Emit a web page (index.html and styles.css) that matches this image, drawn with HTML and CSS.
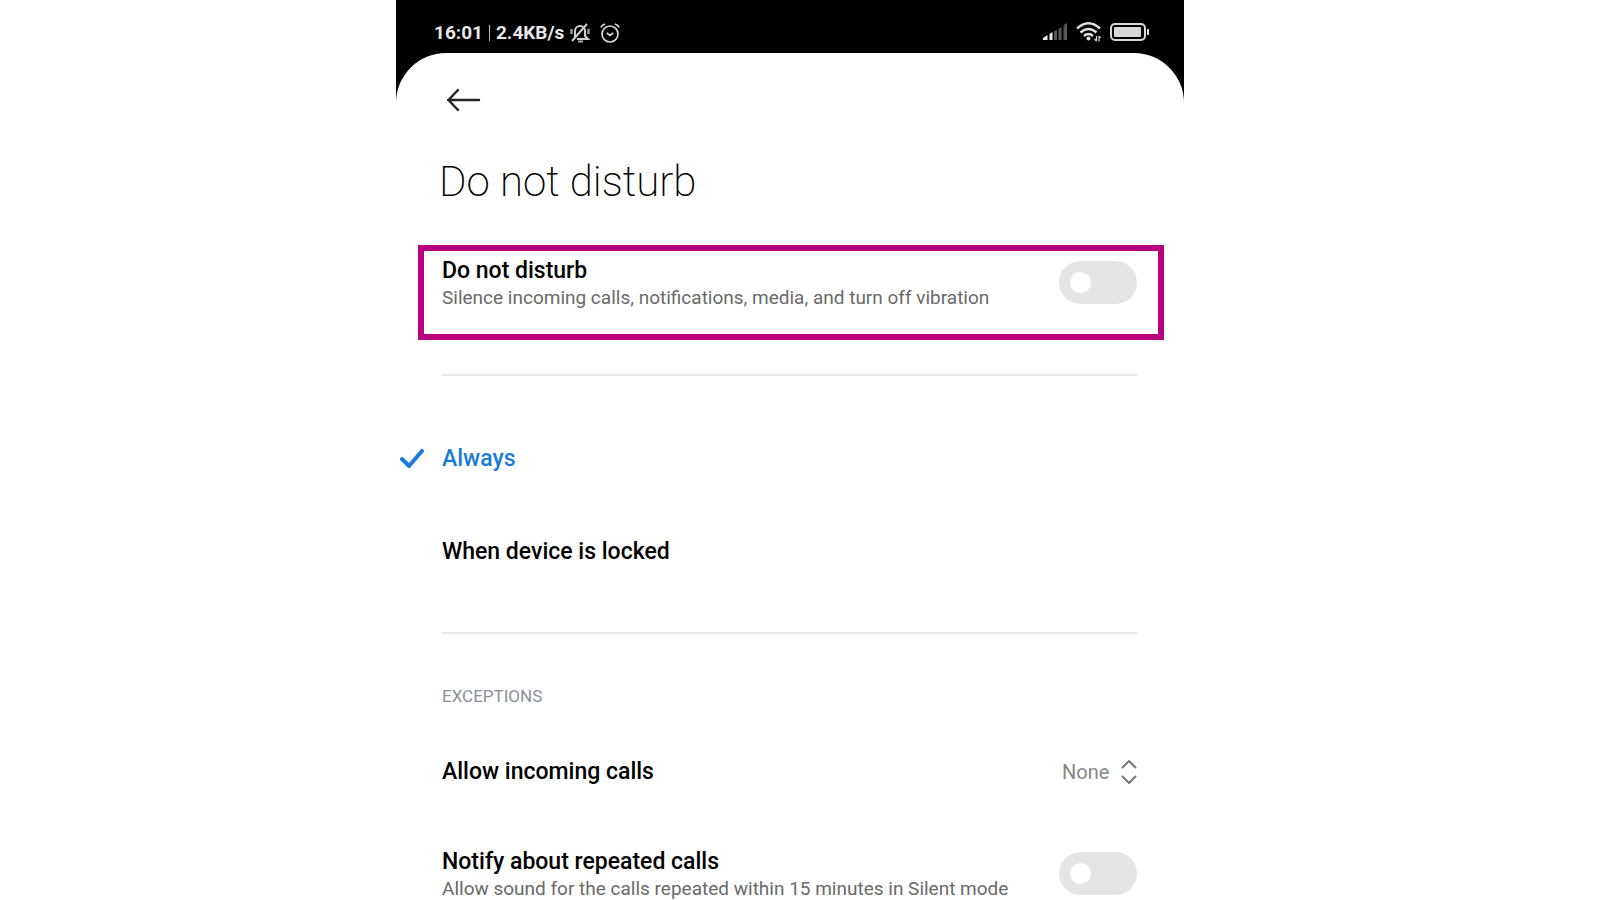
FILE: index.html
```html
<!DOCTYPE html>
<html lang="en">
<head>
    <meta charset="UTF-8">
    <meta name="viewport" content="width=device-width, initial-scale=1.0">
    <title>Do not disturb</title>
    <link rel="stylesheet" href="styles.css">
</head>
<body>

<div class="phone">
    <div class="status-bar">
        <div class="status-left">
            <span>16:01</span>
            <span class="separator"></span>
            <span>2.4KB/s</span>
            <svg class="icon-bell" width="20" height="20" viewBox="0 0 20 20" fill="none" stroke="#d0d0d0" stroke-width="2">
                <path d="M5 14V8a5 5 0 0 1 10 0v5l3 3H7"/>
                <path d="M8 18.500h5" stroke="#aaa"/>
                <path d="M1.500 6v5M18.500 6v5" stroke="#999" stroke-width="2.500"/>
                <path d="M2 18L17 1"/>
            </svg>
            <svg class="icon-alarm" width="20" height="20" viewBox="0 0 20 20" fill="none" stroke="#d8d8d8" stroke-width="1.700">
                <circle cx="10" cy="11" r="8"/>
                <path d="M6.800 10l3.200 2.500 3.200-2.500M.8 4.500Q2 2 5 1M19.200 4.500Q18 2 15 1"/>
            </svg>
        </div>
        <div class="status-right">
            <svg width="24" height="18" viewBox="0 0 24 18">
                <path fill="#e8e8e8" d="M0 17v-2l4.500-3v5zM6.500 17v-6l3-2v8z"/>
                <path fill="#555" d="M11 17V8l3-1v10zM15.500 17V6l3-2v13zM20.500 17V2L24 0v17z"/>
            </svg>
            <svg width="25" height="20" viewBox="0 0 25 20" fill="none" stroke="#e0e0e0" stroke-width="2.400">
                <path d="M1 6.500Q12.500-4 24 6.500M4.500 10.500q8-7 16 0M8 14q4.500-4 9 0"/>
                <circle cx="12.500" cy="16.500" r="2" fill="#e0e0e0" stroke="none"/>
                <path stroke-width="1.200" d="M20.500 14v5M18.500 17l2 2M23 19.500V14M23 14l1.500 2"/>
            </svg>
            <svg width="39" height="18" viewBox="0 0 39 18">
                <rect x="1" y="1" width="34" height="16" rx="4" fill="none" stroke="#d8d8d8" stroke-width="2"/>
                <rect x="4" y="4" width="27" height="10" rx="1" fill="#d8d8d8"/>
                <rect x="37" y="6" width="2" height="6" fill="#d8d8d8"/>
            </svg>
        </div>
    </div>

    <main class="sheet">
        <button type="button" class="back" aria-label="Back">
            <svg width="34" height="24" viewBox="0 0 34 24" fill="none" stroke="#222" stroke-width="2.400" stroke-linecap="round" stroke-linejoin="round">
                <path d="M32 12H1M11 2L1.500 12l9.500 10"/>
            </svg>
        </button>
        <h1>Do not disturb</h1>

        <div class="row highlight">
            <label class="row-text" for="dnd">
                <span class="row-title">Do not disturb</span>
                <span class="row-desc">Silence incoming calls, notifications, media, and turn off vibration</span>
            </label>
            <input type="checkbox" class="switch" id="dnd">
        </div>

        <hr>

        <div class="options">
            <label class="option">
                <input type="radio" name="mode" checked>
                <svg class="tick" width="24" height="20" viewBox="0 0 24 20" fill="none" stroke="#1a7be0" stroke-width="4" stroke-linecap="round" stroke-linejoin="round">
                    <path d="M2 10l7 7L22 2"/>
                </svg>
                <span>Always</span>
            </label>
            <label class="option">
                <input type="radio" name="mode">
                <span>When device is locked</span>
            </label>
        </div>

        <hr>

        <h2>EXCEPTIONS</h2>

        <div class="row calls">
            <label class="row-title" for="calls">Allow incoming calls</label>
            <div class="picker">
                <select id="calls">
                    <option>None</option>
                </select>
                <svg width="16" height="26" viewBox="0 0 16 26" fill="none" stroke="#777" stroke-width="2" stroke-linecap="round" stroke-linejoin="round">
                    <path d="M1.500 8.500L8 2l6.500 6.500M1.500 17.500L8 24l6.500-6.500"/>
                </svg>
            </div>
        </div>

        <div class="row">
            <label class="row-text" for="repeated">
                <span class="row-title">Notify about repeated calls</span>
                <span class="row-desc">Allow sound for the calls repeated within 15 minutes in Silent mode</span>
            </label>
            <input type="checkbox" class="switch" id="repeated">
        </div>
    </main>
</div>

</body>
</html>
```
FILE: styles.css
```css
* {
    box-sizing: border-box;
}
body {
    font-family: Roboto, sans-serif;
    background: #fff;
    color: #000;
    margin: 0;
    padding-right: 20px;
}
.phone {
    display: flex;
    flex-direction: column;
    max-width: 788px;
    height: 100vh;
    margin: 0 auto;
    background: #000;
    overflow: hidden;
}
.status-bar {
    display: flex;
    justify-content: space-between;
    align-items: flex-start;
    flex-shrink: 0;
    padding: 20px 35px 8px 38px;
    color: #e8e8e8;
    font-size: 19px;
    font-weight: 700;
    line-height: 25px;
}
.status-left,
.status-right {
    display: flex;
    align-items: center;
}
.status-right {
    gap: 9px;
    height: 24px;
}
.separator {
    width: 1px;
    height: 16px;
    margin: 0 6px;
    background: #bbb;
}
.icon-bell {
    margin-left: 6px;
}
.icon-alarm {
    margin-left: 10px;
}
.sheet {
    flex: 1;
    min-height: 0;
    padding: 31px 47px 0 46px;
    background: #fff;
    border-radius: 50px 50px 0 0;
    overflow-y: auto;
    scrollbar-width: none;
}
.back {
    display: flex;
    align-items: center;
    height: 32px;
    margin: 0;
    padding: 0 5px;
    border: none;
    background: none;
    cursor: pointer;
}
h1 {
    margin: 41px 0 38px -3px;
    font-size: 42px;
    font-weight: 200;
    line-height: 50px;
}
.row {
    display: flex;
    justify-content: space-between;
    align-items: flex-start;
}
.highlight {
    margin: 0 -27px 0 -24px;
    padding: 5px 21px 23px 18px;
    border: 6px solid #b9007f;
}
.row-text {
    display: flex;
    flex-direction: column;
    padding-top: 1px;
}
.row-title {
    font-size: 23px;
    font-weight: 500;
    line-height: 28px;
}
.row-desc {
    color: #6a6a6a;
    font-size: 19px;
    font-weight: 400;
    line-height: 26px;
}
.switch {
    appearance: none;
    flex-shrink: 0;
    width: 78px;
    height: 43px;
    margin: 5px 0 0;
    padding: 11px;
    border-radius: 22px;
    background: #e5e5e5;
    cursor: pointer;
}
.switch::before {
    content: "";
    display: block;
    width: 21px;
    height: 21px;
    border-radius: 50%;
    background: #fff;
}
.switch:checked {
    background: #1a7be0;
}
.switch:checked::before {
    margin-left: auto;
}
hr {
    height: 2px;
    margin: 34px 0 36px;
    border: none;
    background: #e8e8e8;
}
.option {
    display: flex;
    align-items: center;
    height: 93px;
    font-size: 23px;
    font-weight: 500;
    cursor: pointer;
}
.option input {
    appearance: none;
    width: 0;
    height: 0;
    margin: 0;
}
.option input:checked ~ span {
    color: #1a7bd8;
}
.tick {
    margin-left: -42px;
    margin-right: 18px;
}
h2 {
    margin: 50px 0 25px;
    color: #8a8f99;
    font-size: 17px;
    font-weight: 400;
    line-height: 24px;
}
.calls {
    align-items: center;
    height: 78px;
    margin-bottom: 36px;
}
.picker {
    display: flex;
    align-items: center;
    gap: 11px;
}
.picker select {
    appearance: none;
    padding: 0;
    border: none;
    background: none;
    color: #888;
    font-family: inherit;
    font-size: 20px;
}
```
